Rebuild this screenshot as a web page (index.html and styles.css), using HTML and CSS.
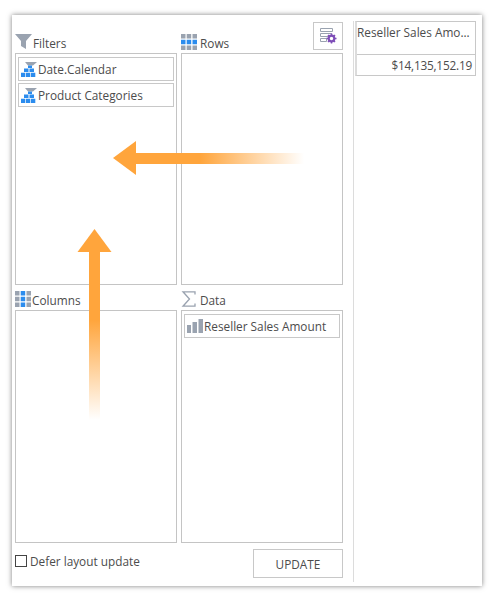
FILE: index.html
```html
<!DOCTYPE html>
<html lang="en">
<head>
    <meta charset="UTF-8">
    <meta name="viewport" content="width=device-width, initial-scale=1.0">
    <title>Pivot field list</title>
    <link rel="stylesheet" href="styles.css">
</head>
<body>
    <div class="card">
        <div class="fields">
            <div class="areas">
                <div class="area-head">
                    <svg class="head-icon funnel" width="17" height="15" viewBox="0 0 17 15">
                        <path d="M0 0h17l-6 7v8l-5-3V7z" fill="#9aa3b0"/>
                    </svg>
                    <span class="head-label">Filters</span>
                </div>
                <div class="area-head wide-gap">
                    <svg class="head-icon" width="16" height="16" viewBox="0 0 16 16">
                        <path d="M0 0h4.500v4.500H0zM5.700 0h4.500v4.500H5.700zM11.500 0H16v4.500h-4.500zM0 11.500h4.500V16H0zM5.700 11.500h4.500V16H5.700zM11.500 11.500H16V16h-4.500z" fill="#9aa3b0"/>
                        <path d="M0 5.700h4.500v4.500H0zM5.700 5.700h4.500v4.500H5.700zM11.500 5.700H16v4.500h-4.500z" fill="#2b8cee"/>
                    </svg>
                    <span class="head-label">Rows</span>
                    <button class="settings" type="button">
                        <svg width="17" height="16" viewBox="0 0 17 16">
                            <path d="M.5.500h12v3H.5zM.5 5.500h11v3H.5zM.5 10.500h6v3H.5z" fill="none" stroke="#9aa3b0"/>
                            <circle cx="11.500" cy="10.500" r="2.800" fill="none" stroke="#7f4fb8" stroke-width="2.200"/>
                            <path d="M11.500 5.500v2M11.500 13.500v2M6.500 10.500h2M14.500 10.500h2M8 7l1.400 1.400M13.600 12.600L15 14M8 14l1.400-1.400M13.600 8.400L15 7" stroke="#7f4fb8" stroke-width="1.500"/>
                        </svg>
                    </button>
                </div>

                <div class="panel">
                    <div class="field">
                        <svg class="field-icon" width="16" height="15" viewBox="0 0 16 15">
                            <path d="M4 0h12l-4 3.500H7z" fill="#9aa3b0"/>
                            <path d="M7 3.500h4v2.500H7zM3 6.500h4.500V10H3zM8.500 6.500H13V10H8.500zM0 10.800h4.300V15H0zM5 10.800h4.300V15H5zM10 10.800h4.300V15H10z" fill="#2b8cee"/>
                        </svg>
                        <span>Date.Calendar</span>
                    </div>
                    <div class="field">
                        <svg class="field-icon" width="16" height="15" viewBox="0 0 16 15">
                            <path d="M4 0h12l-4 3.500H7z" fill="#9aa3b0"/>
                            <path d="M7 3.500h4v2.500H7zM3 6.500h4.500V10H3zM8.500 6.500H13V10H8.500zM0 10.800h4.300V15H0zM5 10.800h4.300V15H5zM10 10.800h4.300V15H10z" fill="#2b8cee"/>
                        </svg>
                        <span>Product Categories</span>
                    </div>
                </div>
                <div class="panel"></div>

                <div class="area-head">
                    <svg class="head-icon" width="16" height="16" viewBox="0 0 16 16">
                        <path d="M0 0h4.500v4.500H0zM11.500 0H16v4.500h-4.500zM0 5.700h4.500v4.500H0zM11.500 5.700H16v4.500h-4.500zM0 11.500h4.500V16H0zM11.500 11.500H16V16h-4.500z" fill="#9aa3b0"/>
                        <path d="M5.700 0h4.500v4.500H5.700zM5.700 5.700h4.500v4.500H5.700zM5.700 11.500h4.500V16H5.700z" fill="#2b8cee"/>
                    </svg>
                    <span class="head-label">Columns</span>
                </div>
                <div class="area-head wide-gap">
                    <svg class="head-icon" width="16" height="16" viewBox="0 0 16 16">
                        <path d="M14 3.500V.8H2L8.500 8 2 15.200h12V12.500" fill="none" stroke="#9aa3b0" stroke-width="1.300"/>
                    </svg>
                    <span class="head-label">Data</span>
                </div>

                <div class="panel"></div>
                <div class="panel">
                    <div class="field">
                        <svg class="field-icon" width="16" height="14" viewBox="0 0 16 14">
                            <path d="M0 6h4v8H0zM5.500 3h4.500v11H5.500zM11.500 0H16v14h-4.500z" fill="#9aa3b0"/>
                        </svg>
                        <span>Reseller Sales Amount</span>
                    </div>
                </div>
            </div>
            <div class="actions">
                <label class="defer">
                    <span class="check"></span>
                    <span>Defer layout update</span>
                </label>
                <button class="update" type="button">UPDATE</button>
            </div>
        </div>

        <div class="result">
            <div class="result-table">
                <div class="result-head">Reseller Sales Amo...</div>
                <div class="result-cell">$14,135,152.19</div>
            </div>
        </div>

        <!-- drag hints over the panels -->
        <svg class="hints" width="494" height="602" viewBox="0 0 494 602">
            <defs>
                <linearGradient id="fadeLeft" gradientUnits="userSpaceOnUse" x1="200" y1="0" x2="304" y2="0">
                    <stop offset="0" stop-color="#ffa53c"/>
                    <stop offset="1" stop-color="#ffa53c" stop-opacity="0"/>
                </linearGradient>
                <linearGradient id="fadeUp" gradientUnits="userSpaceOnUse" x1="0" y1="320" x2="0" y2="420">
                    <stop offset="0" stop-color="#ffa53c"/>
                    <stop offset="1" stop-color="#ffa53c" stop-opacity="0"/>
                </linearGradient>
            </defs>
            <path d="M113 158l23-17v34z" fill="#ffa53c"/>
            <rect x="136" y="153" width="168" height="11" fill="url(#fadeLeft)"/>
            <path d="M94.500 229l17 23h-34z" fill="#ffa53c"/>
            <rect x="89" y="252" width="11" height="168" fill="url(#fadeUp)"/>
        </svg>
    </div>
</body>
</html>
```

FILE: styles.css
```css
body {
    margin: 0;
    background-color: white;
    font-family: "Open Sans", "Noto Sans", Arial, sans-serif;
    font-size: 11.8px;
    color: #4c4c4c;
}
.card {
    display: flex;
    width: 470px;
    height: 571px;
    margin: 15px 12px 16px;
    padding: 6px 0 4px 3px;
    box-sizing: border-box;
    background-color: white;
    box-shadow: 0 0 5px rgba(0, 0, 0, 0.5);
}
.fields {
    width: 328px;
    margin-right: 10px;
}
.areas {
    display: grid;
    grid-template-columns: 162px 162px;
    grid-template-rows: 32px 232px 25px 233px;
    column-gap: 4px;
}
.area-head {
    display: flex;
    align-items: flex-end;
    gap: 1px;
    line-height: 16px;
    padding-bottom: 3px;
    box-sizing: border-box;
}
.wide-gap {
    gap: 3px;
}
.head-label {
    margin-bottom: -1px;
}
.head-icon {
    flex: none;
}
.funnel {
    margin-bottom: 1px;
}
.settings {
    display: flex;
    align-items: center;
    justify-content: center;
    width: 30px;
    height: 28px;
    margin-left: auto;
    padding: 0;
    border: 1px solid #c8c8c8;
    background: white;
}
.panel {
    display: flex;
    flex-direction: column;
    gap: 2px;
    padding: 3px 2px;
    border: 1px solid #c4c4c4;
    box-sizing: border-box;
}
.field {
    display: flex;
    align-items: center;
    gap: 1px;
    height: 24px;
    padding-left: 2px;
    border: 1px solid #c8c8c8;
    box-sizing: border-box;
}
.field-icon {
    flex: none;
}
.actions {
    display: flex;
    justify-content: space-between;
    align-items: flex-start;
    padding-top: 6px;
}
.defer {
    display: flex;
    align-items: center;
    gap: 3px;
    margin-top: 4px;
}
.check {
    width: 12px;
    height: 12px;
    border: 1px solid #444;
    box-sizing: border-box;
}
.update {
    width: 90px;
    height: 29px;
    padding: 0;
    border: 1px solid #c8c8c8;
    background: white;
    font: inherit;
    color: #4c4c4c;
}
.result {
    flex: 1;
    padding-left: 1px;
    border-left: 1px solid #dcdcdc;
}
.result-table {
    width: 121px;
    border: 1px solid #c8c8c8;
    border-left: 2px solid #dcdcdc;
    box-sizing: border-box;
}
.result-head {
    height: 33px;
    padding: 2px 0 0;
    box-sizing: border-box;
    border-bottom: 1px solid #c8c8c8;
    white-space: nowrap;
}
.result-cell {
    height: 20px;
    padding-right: 3px;
    line-height: 20px;
    letter-spacing: -0.2px;
    text-align: right;
}
.hints {
    position: absolute;
    top: 0;
    left: 0;
    pointer-events: none;
}
```
